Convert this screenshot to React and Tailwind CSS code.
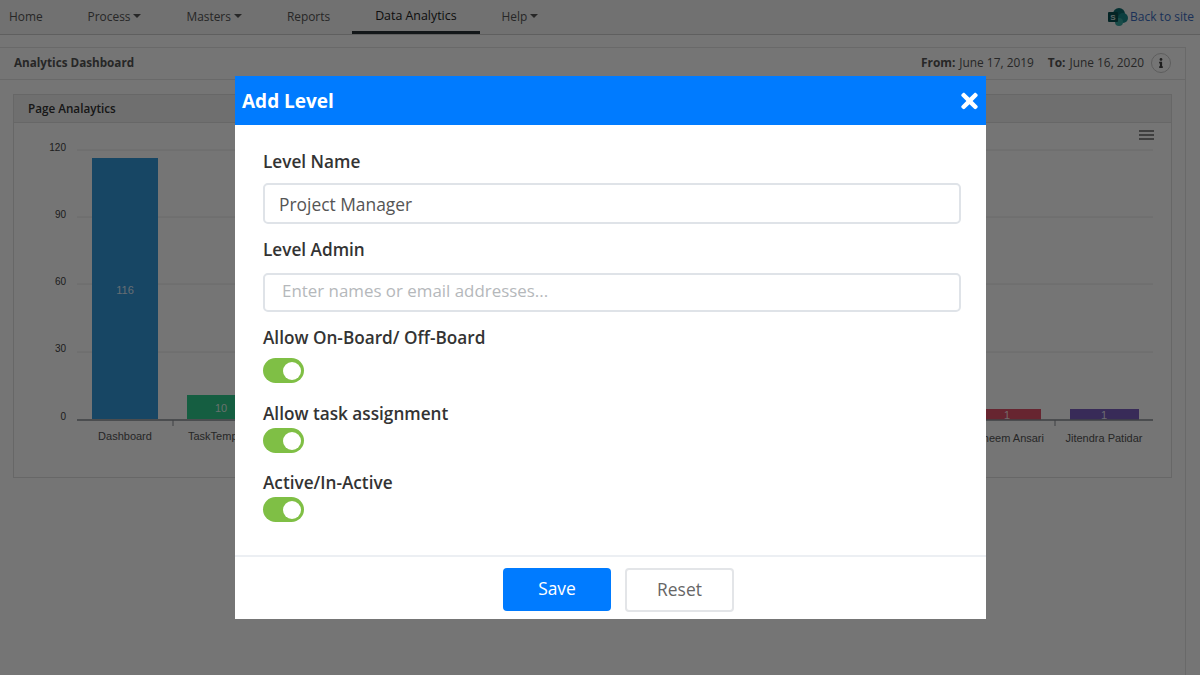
import { FaInfo, FaTimes } from "react-icons/fa";

const navItems = [
  { label: "Home" },
  { label: "Process", caret: true },
  { label: "Masters", caret: true },
  { label: "Reports" },
  { label: "Data Analytics", active: true },
  { label: "Help", caret: true },
];

const gridLines = [
  { y: 150, labelY: 151, label: "120" },
  { y: 217, labelY: 218, label: "90" },
  { y: 284, labelY: 285, label: "60" },
  { y: 352, labelY: 352, label: "30" },
  { y: 420, labelY: 420, label: "0" },
];

function Toggle() {
  return (
    <div className="flex h-[25px] w-[41px] items-center justify-end rounded-full bg-[#7fbf45] pr-[3px]">
      <div className="h-[18px] w-[18px] rounded-full bg-white"></div>
    </div>
  );
}

function SiteLogo() {
  return (
    <svg width="20" height="18" viewBox="0 0 20 18">
      <circle cx="11" cy="6" r="6" fill="#0b6a6e" />
      <circle cx="15" cy="10" r="5" fill="#1a8a8c" />
      <circle cx="11" cy="14" r="4" fill="#37a6a0" />
      <rect x="0" y="4" width="10" height="10" rx="1" fill="#0a4f52" />
      <text x="5" y="12" textAnchor="middle" fontSize="8" fontWeight="700" fill="#cfe3e3" fontFamily="Liberation Sans, sans-serif">
        S
      </text>
    </svg>
  );
}

// chart coords are page coords minus the card body offset (14, 123)
function Chart() {
  return (
    <svg width="1158" height="354" viewBox="14 123 1158 354" className="block" fontFamily="Liberation Sans, Arial, sans-serif">
      {gridLines.map((g) => (
        <g key={g.label}>
          <line x1="77" x2="1153" y1={g.y} y2={g.y} stroke="#e6e6e6" strokeWidth="1" />
          <text x="66" y={g.labelY} textAnchor="end" fontSize="10" fill="#444">
            {g.label}
          </text>
        </g>
      ))}
      <rect x="92" y="158" width="66" height="261" fill="#3498db" />
      <text x="125" y="294" textAnchor="middle" fontSize="11" fill="#fff" fillOpacity="0.85">116</text>
      <rect x="187" y="395" width="66" height="24" fill="#2ecc8f" />
      <text x="221" y="412" textAnchor="middle" fontSize="11" fill="#fff" fillOpacity="0.85">10</text>
      <rect x="975" y="409" width="66" height="11" fill="#e0526a" />
      <text x="1007" y="419" textAnchor="middle" fontSize="11" fill="#fff" fillOpacity="0.85">1</text>
      <rect x="1070" y="409" width="69" height="11" fill="#7a5fc0" />
      <text x="1104" y="419" textAnchor="middle" fontSize="11" fill="#fff" fillOpacity="0.85">1</text>
      <line x1="77" x2="1153" y1="420" y2="420" stroke="#8a8f94" strokeWidth="1.5" />
      <line x1="173" x2="173" y1="420" y2="426" stroke="#8a8f94" />
      <line x1="1055" x2="1055" y1="420" y2="426" stroke="#8a8f94" />
      <text x="125" y="440" textAnchor="middle" fontSize="11" fill="#555">Dashboard</text>
      <text x="188" y="440" fontSize="11" fill="#555">TaskTemplate</text>
      <text x="1007" y="442" textAnchor="middle" fontSize="11" fill="#555">Faheem Ansari</text>
      <text x="1104" y="442" textAnchor="middle" fontSize="11" fill="#555">Jitendra Patidar</text>
    </svg>
  );
}

function Field({ label, children, className }) {
  return (
    <div className={className}>
      <div className="pt-[1px] text-[17.2px] leading-[24px] font-semibold text-[#333]">{label}</div>
      {children}
    </div>
  );
}

function App() {
  return (
    <div className="relative flex h-[675px] w-[1200px] flex-col overflow-hidden bg-white font-['Open_Sans',sans-serif]">
      {/* page behind the dialog */}
      <div className="flex h-[35px] shrink-0 items-stretch justify-between border-b border-[#d0d0d0] bg-[#f6f6f6] pr-[6px] pl-[9px]">
        <div className="flex gap-[45px] text-[11.9px] text-[#555]">
          {navItems.map((item) => (
            <div
              key={item.label}
              className={
                item.active
                  ? "-mx-[23px] flex items-center border-b-[3px] border-[#2b3238] px-[23px] pt-[1px] text-[12.4px] font-medium text-[#222]"
                  : "flex items-center"
              }
            >
              {item.label}
              {item.caret && (
                <span className="mb-[3px] ml-[3px] h-0 w-0 border-x-[4px] border-t-[4px] border-x-transparent border-t-[#555]"></span>
              )}
            </div>
          ))}
        </div>
        <div className="flex items-center gap-[2px] text-[12px] text-[#3b6cc0]">
          <SiteLogo />
          Back to site
        </div>
      </div>

      <div className="mt-[12px] mr-[14px] flex-1 border border-b-0 border-l-0 border-[#e5e5e5]">
        <div className="flex h-[32px] items-center justify-between border-b border-[#e5e5e5] pr-[14px] pb-[2px] pl-[14px] text-[11.7px] text-[#555]">
          <span className="font-bold">Analytics Dashboard</span>
          <div className="flex items-center text-[11.9px]">
            <span className="font-bold">From:</span>
            <span className="ml-[4px]">June 17, 2019</span>
            <span className="ml-[14px] font-bold">To:</span>
            <span className="ml-[4px]">June 16, 2020</span>
            <span className="ml-[7px] flex h-[20px] w-[20px] items-center justify-center rounded-full border border-[#ccc] text-[#444]">
              <FaInfo className="h-[10px] w-[10px]" />
            </span>
          </div>
        </div>
        <div className="mx-[13px] mt-[14px] border border-[#e0e0e0]">
          <div className="flex h-[28px] items-center border-b border-[#e0e0e0] bg-[#f2f2f2] pl-[14px] text-[11.7px] font-semibold text-[#333]">
            Page Analaytics
          </div>
          <div className="relative">
            <Chart />
            <div className="absolute top-[7px] right-[17px] flex w-[15px] flex-col gap-[2px]">
              <div className="h-[2px] bg-[#8a8a8a]"></div>
              <div className="h-[2px] bg-[#8a8a8a]"></div>
              <div className="h-[2px] bg-[#8a8a8a]"></div>
            </div>
          </div>
        </div>
      </div>

      {/* dialog */}
      <div className="absolute inset-0 bg-black/[0.54]">
        <div className="absolute top-[76px] left-[235px] flex h-[543px] w-[751px] flex-col bg-white">
          <div className="flex h-[49px] items-center justify-between bg-[#007bff] pt-[2px] pr-[6px] pl-[7px] text-white">
            <span className="text-[19px] font-bold">Add Level</span>
            <FaTimes className="-mt-[2px] h-[24px] w-[21px]" />
          </div>
          <div className="flex-1 pt-[24px] pr-[25px] pl-[28px]">
            <Field label="Level Name">
              <div className="mt-[9px] flex h-[41px] items-center rounded-[5px] border-2 border-[#dfe3e8] pt-[1px] pl-[14px] text-[17.4px] text-[#555]">
                Project Manager
              </div>
            </Field>
            <Field label="Level Admin" className="mt-[13px]">
              <div className="mt-[11px] flex h-[39px] items-center rounded-[5px] border-2 border-[#dfe3e8] pl-[17px] text-[16.9px] text-[#b5b8bb]">
                <span className="-mt-[3px]">Enter names or email addresses...</span>
              </div>
            </Field>
            <Field label="Allow On-Board/ Off-Board" className="mt-[13px]">
              <div className="mt-[8px]">
                <Toggle />
              </div>
            </Field>
            <Field label="Allow task assignment" className="mt-[18px]">
              <div className="mt-[2px]">
                <Toggle />
              </div>
            </Field>
            <Field label="Active/In-Active" className="mt-[17px]">
              <div className="mt-[2px]">
                <Toggle />
              </div>
            </Field>
          </div>
          <div className="flex h-[64px] justify-center gap-[14px] border-t-2 border-[#eceff3] pt-[11px] pl-[16px]">
            <div className="flex h-[43px] w-[108px] items-center justify-center rounded-[4px] bg-[#007bff] pb-[2px] text-[17.4px] text-white">
              Save
            </div>
            <div className="flex h-[44px] w-[109px] items-center justify-center rounded-[4px] border-2 border-[#e3e5e8] pb-[2px] text-[17.4px] text-[#666]">
              Reset
            </div>
          </div>
        </div>
      </div>
    </div>
  );
}

export default App;
